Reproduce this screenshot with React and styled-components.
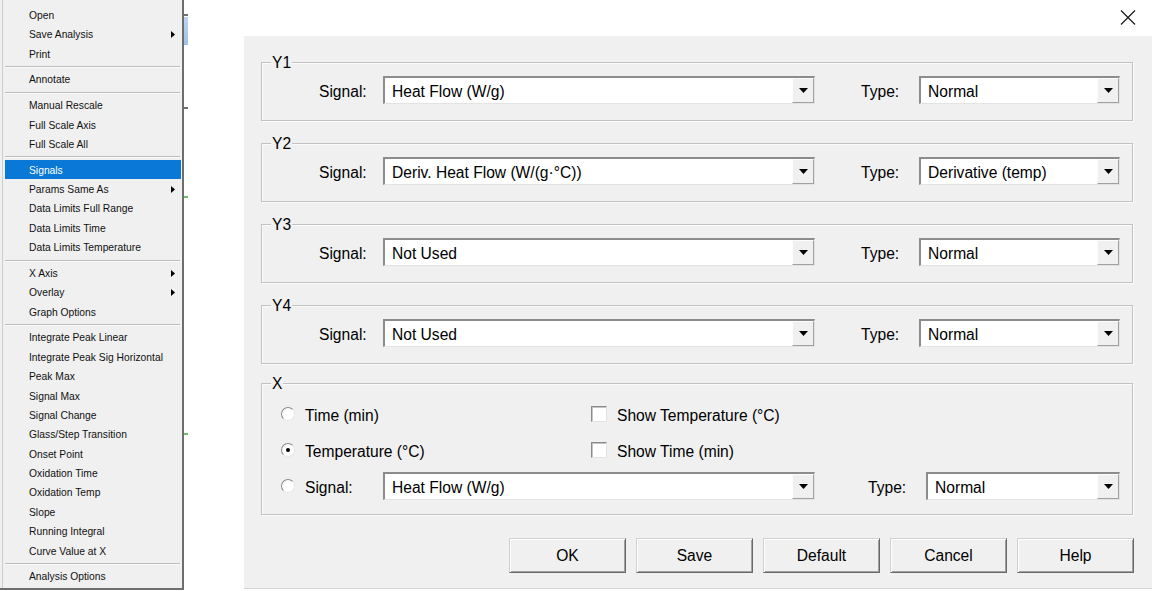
import React from 'react';
import styled, { createGlobalStyle } from 'styled-components';

const GlobalStyle = createGlobalStyle`
  html, body { margin: 0; padding: 0; background: #fff; }
  body { font-family: "Liberation Sans", Arial, sans-serif; color: #000; }
  * { box-sizing: border-box; }
`;

const Page = styled.div`
  display: flex;
  width: 1152px;
  height: 591px;
  overflow: hidden;
  background: #fff;
`;

/* ---------- context menu ---------- */
const Menu = styled.div`
  flex: none;
  width: 184px;
  height: 590px;
  background: #f0f0f0;
  border-right: 2px solid #6e6e6e;
  border-bottom: 2px solid #6e6e6e;
  padding: 5.3px 1px 0 5px;
  box-shadow: inset 2px 0 0 #f0f0f0, inset 3px 0 0 #cdcdcd;
  display: flex;
  flex-direction: column;
  font-size: 10.3px;
`;

const MenuItem = styled.div`
  height: 19.4px;
  flex: none;
  display: flex;
  align-items: center;
  justify-content: space-between;
  padding: 1px 6px 0 24px;
  background: ${(p) => (p.$active ? '#0a78d7' : 'transparent')};
  color: ${(p) => (p.$active ? '#ffffff' : '#111')};
  white-space: nowrap;
`;

const MenuSeparator = styled.div`
  height: 6.3px;
  flex: none;
  display: flex;
  align-items: center;
  &::after {
    content: '';
    display: block;
    width: 175px;
    height: 1px;
    background: #bdbdbd;
    box-shadow: 0 1px 0 #fafafa;
  }
`;

const SubArrow = () => (
  <svg width="4" height="7" viewBox="0 0 4 7">
    <polygon points="0,0 4,3.5 0,7" fill="#000" />
  </svg>
);

/* ---------- chart peeking behind the menu ---------- */
const ChartEdge = styled.div`
  flex: none;
  width: 60px;
  height: 100%;
  position: relative;
  background: #fff;
`;

const ChartBit = styled.div`
  position: absolute;
  left: 0;
  width: 4px;
  top: ${(p) => p.$top}px;
  height: ${(p) => p.$h}px;
  background: ${(p) => p.$bg};
`;

/* ---------- dialog ---------- */
const Dialog = styled.div`
  flex: 1;
  display: flex;
  flex-direction: column;
  height: 591px;
`;

const TitleBar = styled.div`
  height: 36px;
  flex: none;
  background: #fff;
  display: flex;
  justify-content: flex-end;
  align-items: flex-start;
  padding: 10px 16px 0 0;
`;

const Body = styled.div`
  height: 553px;
  flex: none;
  background: #f0f0f0;
  border-bottom: 1px solid #d4d4d4;
  padding: 26px 19px 0 17px;
  display: flex;
  flex-direction: column;
  font-size: 15.6px;
`;

const Group = styled.div`
  position: relative;
  margin-top: ${(p) => p.$mt || 0}px;
  height: ${(p) => p.$h}px;
  border: 1px solid #c2c2c2;
  box-shadow: inset 1px 1px 0 #fbfbfb, 1px 1px 0 #fbfbfb;
  padding: ${(p) => p.$pad};
  display: flex;
  flex-direction: column;
  gap: 8px;
`;

const Legend = styled.span`
  position: absolute;
  top: -9px;
  left: 9px;
  padding: 0 1px;
  line-height: 18px;
  background: #f0f0f0;
`;

const Row = styled.div`
  display: flex;
  align-items: center;
  height: 28px;
  flex: none;
`;

const Label = styled.div`
  flex: none;
  width: ${(p) => p.$w}px;
  margin-left: ${(p) => p.$ml || 0}px;
  padding-top: 3px;
  white-space: nowrap;
`;

const Combo = styled.div`
  flex: none;
  width: ${(p) => p.$w}px;
  height: 28px;
  background: #fff;
  border-style: solid;
  border-width: 2px 1px 1px 2px;
  border-color: #8c8c8c #e3e3e3 #e3e3e3 #8c8c8c;
  display: flex;
  align-items: stretch;
`;

const ComboText = styled.div`
  flex: 1;
  display: flex;
  align-items: center;
  padding: 2px 0 0 7px;
  white-space: nowrap;
  overflow: hidden;
`;

const ComboButton = styled.div`
  flex: none;
  width: 22px;
  background: #f0f0f0;
  border-style: solid;
  border-width: 1px;
  border-color: #fdfdfd #a0a0a0 #a0a0a0 #fdfdfd;
  display: flex;
  align-items: center;
  justify-content: center;
`;

const DropArrow = () => (
  <svg width="9" height="5" viewBox="0 0 9 5">
    <polygon points="0,0 9,0 4.5,5" fill="#000" />
  </svg>
);

const Select = ({ w, value }) => (
  <Combo $w={w}>
    <ComboText>{value}</ComboText>
    <ComboButton>
      <DropArrow />
    </ComboButton>
  </Combo>
);

const Option = styled.div`
  flex: none;
  width: ${(p) => p.$w}px;
  display: flex;
  align-items: center;
  gap: 10px;
  white-space: nowrap;
`;

const OptionText = styled.span`
  padding-top: 3px;
`;

const Radio = styled.span`
  flex: none;
  width: 14px;
  height: 14px;
  border-radius: 50%;
  background: #fff;
  border: 1px solid;
  border-color: #8a8a8a #e6e6e6 #e6e6e6 #8a8a8a;
  display: flex;
  align-items: center;
  justify-content: center;
  &::after {
    content: '';
    display: ${(p) => (p.$checked ? 'block' : 'none')};
    width: 4px;
    height: 4px;
    border-radius: 50%;
    background: #000;
  }
`;

const Check = styled.span`
  flex: none;
  width: 16px;
  height: 16px;
  background: #fff;
  border: 1px solid;
  border-color: #8a8a8a #e3e3e3 #e3e3e3 #8a8a8a;
  box-shadow: inset 1px 1px 0 #c4c4c4;
`;

const ButtonRow = styled.div`
  display: flex;
  justify-content: flex-end;
  gap: 10px;
  margin-top: 23px;
  margin-right: -1px;
`;

const Button = styled.div`
  width: 117px;
  height: 35px;
  display: flex;
  align-items: center;
  justify-content: center;
  background: #f0f0f0;
  border: 1px solid;
  border-color: #d0d0d0 #696969 #696969 #d0d0d0;
  box-shadow: inset 1px 1px 0 #fff, inset -1px -1px 0 #a0a0a0;
`;

const CloseIcon = () => (
  <svg width="16" height="15" viewBox="0 0 16 15">
    <path d="M1 0.5 L15 14.5 M15 0.5 L1 14.5" stroke="#1a1a1a" strokeWidth="1.2" fill="none" />
  </svg>
);

const menuEntries = [
  { t: 'Open' },
  { t: 'Save Analysis', sub: true },
  { t: 'Print' },
  'sep',
  { t: 'Annotate' },
  'sep',
  { t: 'Manual Rescale' },
  { t: 'Full Scale Axis' },
  { t: 'Full Scale All' },
  'sep',
  { t: 'Signals', active: true },
  { t: 'Params Same As', sub: true },
  { t: 'Data Limits Full Range' },
  { t: 'Data Limits Time' },
  { t: 'Data Limits Temperature' },
  'sep',
  { t: 'X Axis', sub: true },
  { t: 'Overlay', sub: true },
  { t: 'Graph Options' },
  'sep',
  { t: 'Integrate Peak Linear' },
  { t: 'Integrate Peak Sig Horizontal' },
  { t: 'Peak Max' },
  { t: 'Signal Max' },
  { t: 'Signal Change' },
  { t: 'Glass/Step Transition' },
  { t: 'Onset Point' },
  { t: 'Oxidation Time' },
  { t: 'Oxidation Temp' },
  { t: 'Slope' },
  { t: 'Running Integral' },
  { t: 'Curve Value at X' },
  'sep',
  { t: 'Analysis Options' },
];

const yGroups = [
  { name: 'Y1', signal: 'Heat Flow (W/g)', type: 'Normal' },
  { name: 'Y2', signal: 'Deriv. Heat Flow (W/(g·°C))', type: 'Derivative (temp)' },
  { name: 'Y3', signal: 'Not Used', type: 'Normal' },
  { name: 'Y4', signal: 'Not Used', type: 'Normal' },
];

export default function App() {
  return (
    <>
      <GlobalStyle />
      <Page>
        <Menu>
          {menuEntries.map((e, i) =>
            e === 'sep' ? (
              <MenuSeparator key={i} />
            ) : (
              <MenuItem key={i} $active={e.active}>
                <span>{e.t}</span>
                {e.sub && <SubArrow />}
              </MenuItem>
            )
          )}
        </Menu>
        <ChartEdge>
          <ChartBit $top={14} $h={2} $bg="#707070" />
          <ChartBit $top={17} $h={28} $bg="linear-gradient(#bcd5ef, #9fc2e7)" />
          <ChartBit $top={107} $h={2} $bg="#707070" />
          <ChartBit $top={196} $h={2} $bg="#6cbf6c" />
          <ChartBit $top={433} $h={2} $bg="#6cbf6c" />
        </ChartEdge>
        <Dialog>
          <TitleBar>
            <CloseIcon />
          </TitleBar>
          <Body>
            {yGroups.map((g, i) => (
              <Group key={g.name} $mt={i === 0 ? 0 : 22} $h={59} $pad="13px 12px 16px 57px">
                <Legend>{g.name}</Legend>
                <Row>
                  <Label $w={64}>Signal:</Label>
                  <Select w={432} value={g.signal} />
                  <Label $w={58} $ml={46}>Type:</Label>
                  <Select w={201} value={g.type} />
                </Row>
              </Group>
            ))}
            <Group $mt={19} $h={132} $pad="16px 12px 14px 19px">
              <Legend>X</Legend>
              <Row>
                <Option $w={310}>
                  <Radio />
                  <OptionText>Time (min)</OptionText>
                </Option>
                <Option $w={300}>
                  <Check />
                  <OptionText>Show Temperature (°C)</OptionText>
                </Option>
              </Row>
              <Row>
                <Option $w={310}>
                  <Radio $checked />
                  <OptionText>Temperature (°C)</OptionText>
                </Option>
                <Option $w={300}>
                  <Check />
                  <OptionText>Show Time (min)</OptionText>
                </Option>
              </Row>
              <Row>
                <Option $w={102}>
                  <Radio />
                  <OptionText>Signal:</OptionText>
                </Option>
                <Select w={432} value="Heat Flow (W/g)" />
                <Label $w={58} $ml={53}>Type:</Label>
                <Select w={194} value="Normal" />
              </Row>
            </Group>
            <ButtonRow>
              <Button>OK</Button>
              <Button>Save</Button>
              <Button>Default</Button>
              <Button>Cancel</Button>
              <Button>Help</Button>
            </ButtonRow>
          </Body>
        </Dialog>
      </Page>
    </>
  );
}
